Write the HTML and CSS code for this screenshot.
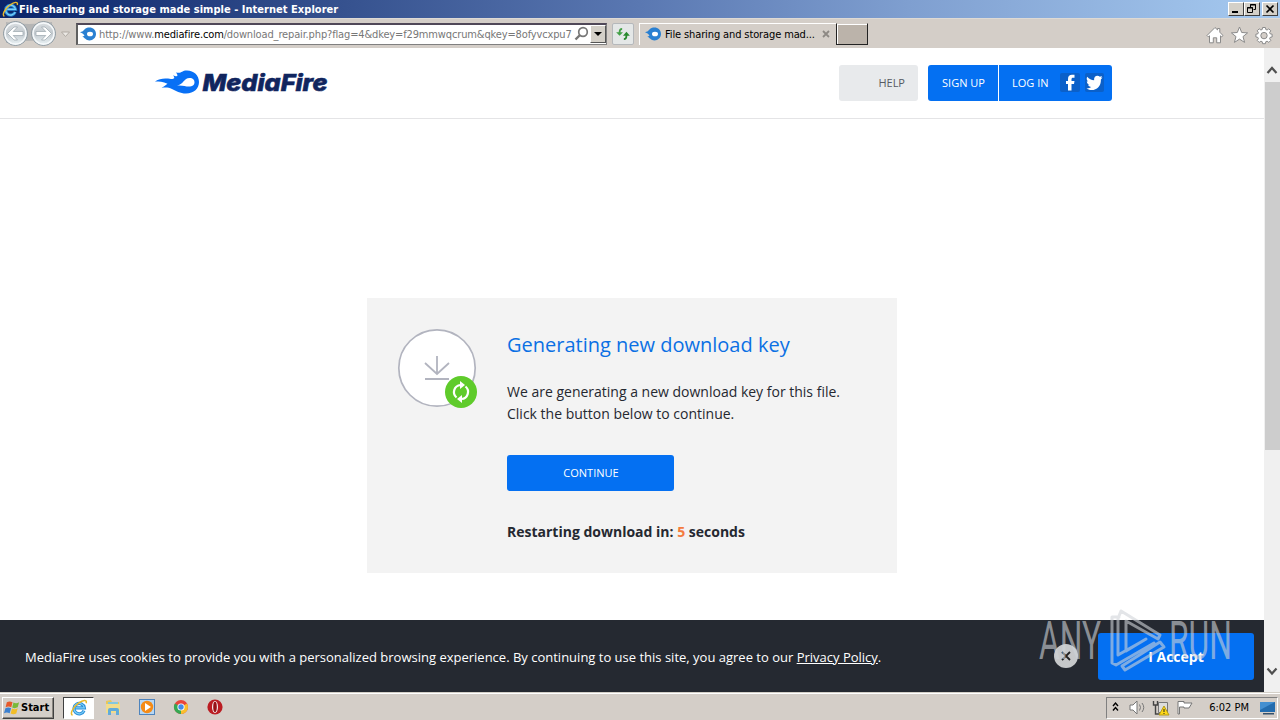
FILE: index.html
```html
<!DOCTYPE html>
<html lang="en">
<head>
<meta charset="utf-8">
<title>File sharing and storage made simple</title>
<link rel="stylesheet" href="styles.css">
</head>
<body>
<svg class="defs" width="0" height="0" aria-hidden="true">
  <defs>
    <symbol id="ie" viewBox="0 0 18 18">
      <path d="M14 11.6A5.2 5.2 0 1 1 14.3 8.8H5.6" fill="none" stroke="#2b8fd9" stroke-width="3.2"/>
      <path d="M14 11.6A5.2 5.2 0 1 1 14.3 8.8H5.6" fill="none" stroke="#7fd0f8" stroke-width="1.2"/>
      <path d="M2.5 16.2C-.5 15 3 8.2 8.5 4.2 13 .9 17.2.2 16.2 4.2" fill="none" stroke="#e9b92c" stroke-width="1.5"/>
    </symbol>
    <symbol id="flame" viewBox="0 0 16 14">
      <path d="M0 5.2C2 4.8 3 4.3 4 3 5.500 1.200 7.500.6 9.500.6 13 .6 16 3.300 16 7s-3 6.400-6.500 6.400C6 13.400 4.500 10.500 2.200 9.200 3.500 9.300 4 9 4.500 8.500 3 6.400 1.500 5.900 0 5.200Z" fill="#2a80d2"/>
      <ellipse cx="10" cy="7" rx="3" ry="2.300" fill="#fff"/>
    </symbol>
  </defs>
</svg>
<div class="window">
  <div class="titlebar">
    <svg class="title-ie" width="17" height="17"><use href="#ie"/></svg>
    <span class="title-text">File sharing and storage made simple - Internet Explorer</span>
    <div class="winbtns">
      <span class="winbtn"><svg width="14" height="12"><path d="M3 9h6" stroke="#000" stroke-width="2"/></svg></span>
      <span class="winbtn"><svg width="14" height="12"><path d="M5.500 4V1.500h5v5H8.500M5 2h6M2.500 4.500h5v5h-5zM2 5h6" fill="none" stroke="#000"/></svg></span>
      <span class="winbtn close"><svg width="14" height="12"><path d="M3.500 2.500l7 7M10.500 2.500l-7 7" stroke="#000" stroke-width="1.700"/></svg></span>
    </div>
  </div>

  <div class="toolbar">
    <svg class="nav" width="76" height="30" viewBox="0 0 76 30">
      <defs><linearGradient id="nv" x1="0" y1="0" x2="0" y2="1"><stop offset="0" stop-color="#dce0e3"/><stop offset=".5" stop-color="#c3cacf"/><stop offset="1" stop-color="#edf5f8"/></linearGradient></defs>
      <path d="M6 3Q29 7 52 3L53 23Q30 20 6 24Z" fill="#b5b5b5"/>
      <circle cx="15.500" cy="14.500" r="12" fill="url(#nv)" stroke="#8b979f"/>
      <circle cx="43.500" cy="14.500" r="12" fill="url(#nv)" stroke="#8b979f"/>
      <circle cx="15.500" cy="14.500" r="10.500" fill="none" stroke="#f5f8fa" stroke-width="1.500"/>
      <circle cx="43.500" cy="14.500" r="10.500" fill="none" stroke="#f5f8fa" stroke-width="1.500"/>
      <path d="M7.500 14.500l6.500-6.500h3.500l-4.300 4.500H23v4H13.200l4.300 4.500H14z" fill="#fff" stroke="#9aa5ac" stroke-width=".7"/>
      <path d="M51.500 14.500L45 8h-3.500l4.300 4.500H36v4h9.800L41.500 21H45z" fill="#fff" stroke="#9aa5ac" stroke-width=".7"/>
      <path d="M61.500 13h8l-4 4.500z" fill="#ece9e5" stroke="#b0aaa3"/>
    </svg>
    <div class="address">
      <svg class="fav" width="16" height="14"><use href="#flame"/></svg>
      <span class="url">http://www.<b>mediafire.com</b>/download_repair.php?flag=4&amp;dkey=f29mmwqcrum&amp;qkey=8ofyvcxpu7</span>
      <svg class="search" width="16" height="16" viewBox="0 0 16 16"><circle cx="9" cy="6" r="4.300" fill="none" stroke="#767676" stroke-width="1.700"/><path d="M6 9l-4.500 4.500" stroke="#767676" stroke-width="2.400"/></svg>
      <span class="drop"><svg width="8" height="4"><path d="M0 0h8L4 4z"/></svg></span>
    </div>
    <span class="refresh"><svg width="14" height="12" viewBox="0 0 16 14"><path d="M7 1Q4 1 4 5v2" fill="none" stroke="#43a047" stroke-width="2"/><path d="M0 5h8L4 9z" fill="#43a047"/><path d="M9 13q3 0 3-4V8" fill="none" stroke="#27892d" stroke-width="2"/><path d="M8 9h8L12 4.500z" fill="#27892d"/></svg></span>
    <div class="tab">
      <svg width="16" height="14"><use href="#flame"/></svg>
      <span class="tab-text">File sharing and storage mad...</span>
      <svg class="tab-x" width="8" height="8"><path d="M1 1l6 6M7 1l-6 6" stroke="#8d8984" stroke-width="1.800"/></svg>
    </div>
    <span class="newtab"></span>
    <svg class="tools" width="68" height="20" viewBox="0 0 68 20" fill="#fff" stroke="#8a8a8a" stroke-width="1">
      <path d="M1 10.500L9 2.500l2.500 2.400V3.500h2.300v3.700L17 10.500l-1.300 1.300-1.200-1v7h-3.800v-5H7.300v5H3.500v-7l-1.200 1z"/>
      <path d="M33.500 2l2.200 5.500 5.900.4-4.600 3.700 1.600 5.800-5.100-3.300-5.100 3.300 1.600-5.800-4.600-3.700 5.900-.4z"/>
      <path fill-rule="evenodd" d="M56.600 2.500h2.800l.4 2 1.300.5 1.700-1.200 2 2-1.200 1.700.5 1.300 2 .4V12l-2 .4-.5 1.300 1.200 1.700-2 2-1.700-1.200-1.300.5-.4 2h-2.800l-.4-2-1.300-.5-1.700 1.200-2-2 1.200-1.700-.5-1.300-2-.4V9.200l2-.4.5-1.300-1.200-1.700 2-2L54.900 5l1.300-.5zM58 7.400a3.200 3.200 0 1 0 0 6.400 3.200 3.200 0 0 0 0-6.400z"/>
    </svg>
  </div>

  <div class="viewport">
    <div class="page">
      <header class="header">
        <svg class="logo" width="176" height="28" viewBox="0 0 176 28">
          <path d="M1 12.500C6 9.500 10 9 17 10 20 10.200 21.500 9 19 6.200 24 8.500 24.500 6.500 22 3.500 28 5 27 1.500 33 1.500 40 1.500 45 6.500 45 13S40 24.500 32 24.500C26 24.500 22 22 18 20 14 18 11 18.500 7.500 18.800 10.500 17.500 11.500 16 13.500 14.800 9 12.500 5 12.500 1 12.500Z" fill="#0870f5"/>
          <path d="M23 16.500C29 16 30 9 35.500 9c3.500 0 5 2 5 4.200 0 3-2.500 4.300-5.500 4.300-4 0-6-1.500-12-1z" fill="#fff"/>
          <text class="wordmark" x="48.500" y="22" textLength="125" lengthAdjust="spacingAndGlyphs">MediaFire</text>
        </svg>
        <div class="actions">
          <span class="btn help">HELP</span>
          <div class="account">
            <span class="btn signup">SIGN UP</span>
            <span class="btn login">LOG IN
              <svg class="social" width="45" height="20" viewBox="0 0 45 20"><rect x="0" y="0" width="20" height="19" rx="2" fill="#0b60c9"/><rect x="25" y="0" width="19" height="19" rx="2" fill="#0b60c9"/><path d="M8 17.500v-6.500H6V8h2V6c0-3 1.700-4.200 4-4.200h2.500v3H13c-1.100 0-1.500.6-1.500 1.700V8h3l-.5 3h-2.500v6.500z" fill="#fff"/><path d="M42.500 4.500l-1.600 1.900c.3 6.500-4 10.600-9.200 10.600-2.300 0-4.100-.6-5.200-1.500 2 .1 3.500-.4 4.700-1.400-1.700-.2-2.600-1-3.100-2.300h1.300c-1.600-.7-2.500-2-2.600-3.600l1.400.4C26.600 7.300 26.300 5.300 27.200 3.800c2 2.200 4.100 3.300 6.900 3.400-.5-4.600 3.800-5.400 5.800-3.400l2.200-.8-1.100 1.700z" fill="#fff"/></svg>
            </span>
          </div>
        </div>
      </header>
      <main class="content">
        <section class="card">
          <svg class="dl" width="82" height="82" viewBox="0 0 82 82">
            <circle cx="40" cy="40" r="38.200" fill="#fff" stroke="#b2b4bf" stroke-width="1.700"/>
            <path d="M40 28v17.500M28 35l12 11 12-11M28 51h24" fill="none" stroke="#b2b4bf" stroke-width="1.800"/>
            <circle cx="64" cy="64" r="16" fill="#5fcb2b"/>
            <path d="M59.500 69.500A7.100 7.100 0 0 1 63.500 57M68.500 58.500A7.100 7.100 0 0 1 64.500 71" fill="none" stroke="#fff" stroke-width="2.200"/>
            <path d="M63 53l5 4-5 4zM65 67l-5 4 5 4z" fill="#fff"/>
          </svg>
          <div class="message">
            <h1 class="heading">Generating new download key</h1>
            <p class="body-text">We are generating a new download key for this file.<br>Click the button below to continue.</p>
            <span class="btn continue">CONTINUE</span>
            <p class="countdown">Restarting download in: <span class="seconds">5</span> seconds</p>
          </div>
        </section>
      </main>
      <div class="cookies">
        <span class="cookie-text">MediaFire uses cookies to provide you with a personalized browsing experience. By continuing to use this site, you agree to our <u>Privacy Policy</u>.</span>
        <svg class="dismiss" width="24" height="24"><circle cx="12" cy="12" r="12" fill="#c6c8ca"/><path d="M8 8l8 8M16 8l-8 8" stroke="#222" stroke-width="1.800"/></svg>
        <span class="accept">I Accept</span>
      </div>
      <svg class="watermark" width="200" height="70" viewBox="0 0 200 70">
        <text x="6" y="53" textLength="62" lengthAdjust="spacingAndGlyphs">ANY</text>
        <text x="136" y="53" textLength="63" lengthAdjust="spacingAndGlyphs">RUN</text>
        <path d="M86 11H79V57L83 59 121 37M85 11V49L108 36M86 10L88 5 127 29 125 33 93 15V45L113 33M89 60l3 4 39-23-4-5z" fill="none" stroke="#d0d4d8" stroke-opacity=".6" stroke-width="3" stroke-linejoin="round" stroke-linecap="round"/>
      </svg>
    </div>
    <div class="scrollbar">
      <svg width="16" height="34"><path d="M3.500 25l4.500-5 4.500 5" fill="none" stroke="#505050" stroke-width="2.200"/></svg>
      <div class="track"><div class="thumb"></div></div>
      <svg width="16" height="34"><path d="M3.500 10.500l4.500 5 4.500-5" fill="none" stroke="#505050" stroke-width="2.200"/></svg>
    </div>
  </div>

  <div class="taskbar">
    <div class="start">
      <svg width="17" height="16" viewBox="0 0 18 16"><path d="M3 2q3-2 6 0L7.700 7.200q-3-1.600-6 0z" fill="#e6592b"/><path d="M10 2.300q3 1.500 6-.3l-1.500 5.300q-3 1.600-5.800.2z" fill="#79b93a"/><path d="M1.500 8.200q3-1.700 6 0L6 13.500q-3-1.600-6 0z" fill="#3c80d0"/><path d="M8.500 8.500q3 1.500 6-.2L13 13.800q-3 1.500-6 0z" fill="#f2bd27"/></svg>
      <span class="start-text">Start</span>
    </div>
    <div class="task active"><svg width="18" height="18"><use href="#ie"/></svg></div>
    <div class="apps">
      <svg width="18" height="18" viewBox="0 0 18 18"><path d="M2 3l5-1 1 2h7v10H2z" fill="#e8c75b"/><path d="M4 4h10v5H4z" fill="#83c8df"/><path d="M2 6h14v9H2z" fill="#f1dc8c"/><path d="M4 17v-5q0-2 2-2h7q2 0 2 2v5h-3v-4H7v4z" fill="#62abd9"/></svg>
      <svg width="18" height="18" viewBox="0 0 18 18"><rect x="1.500" y="1.500" width="15" height="15" fill="#b7d7f4" stroke="#4e84bd"/><circle cx="9" cy="9" r="6.200" fill="#f58b16"/><path d="M7 5l6 4-6 4z" fill="#fff"/></svg>
      <svg width="18" height="18" viewBox="0 0 18 18"><circle cx="9" cy="9" r="7" fill="#e8453c"/><path d="M9 9L2.900 5.500A7 7 0 0 0 9 16z" fill="#35a853"/><path d="M9 9l6-3.500A7 7 0 0 1 9 16z" fill="#f9bf2d"/><circle cx="9" cy="9" r="3.600" fill="#fff"/><circle cx="9" cy="9" r="2.700" fill="#438bea"/></svg>
      <svg width="18" height="18" viewBox="0 0 18 18"><circle cx="9" cy="9" r="7.600" fill="#bb1c22"/><ellipse cx="9" cy="9" rx="3" ry="6" fill="#f6eeee"/><ellipse cx="9" cy="9" rx="1.800" ry="5.200" fill="#981116"/></svg>
    </div>
    <div class="tray">
      <svg class="tray-icons" width="84" height="18" viewBox="0 0 84 18" fill="none" stroke="#777">
        <path d="M2 7l2.500-3L7 7M2 11.500l2.500-3 2.500 3" stroke="#000" stroke-width="1.400"/>
        <path d="M19 6h3l4-4v13l-4-4h-3z" fill="#fff"/><path d="M28.500 5.500q2 3 0 6M31 4q3.500 4.500 0 9" />
        <path d="M47.500 3.500h9v10h-9z" fill="#ddd"/><path d="M42.500 2v4h4V2M44.500 6v9h5" stroke="#444" stroke-width="1.400"/><path d="M53 7l5 9H48z" fill="#ffd817" stroke="#b59b18"/><path d="M53 10v3M53 14v1" stroke="#222"/>
        <path d="M67 2.500h6v1.500h8l-3 5h-5V8h-4.500V15H67z" fill="#fff"/>
      </svg>
      <span class="clock">6:02 PM</span>
      <svg width="16" height="16" viewBox="0 0 16 16"><path d="M0 2h15v10H0z" fill="#236cae"/><path d="M0 2h15L0 10z" fill="#438fd0"/><path d="M3 13h11v1.500H3z" fill="#34506a"/></svg>
    </div>
  </div>
</div>
</body>
</html>
```
FILE: styles.css
```css
* { box-sizing: border-box; }
body { margin: 0; overflow: hidden; background: #fff; font-family: "Open Sans", sans-serif; }
p, h1 { margin: 0; }
svg { display: block; flex: none; }
.defs { position: absolute; }
.window { display: flex; flex-direction: column; width: 1280px; height: 720px; white-space: nowrap; }

.titlebar, .toolbar, .taskbar { display: flex; align-items: center; flex: none; font-family: "DejaVu Sans Condensed", "DejaVu Sans", sans-serif; font-size: 11px; color: #000; }
.titlebar { height: 18px; padding-left: 2px; background: linear-gradient(90deg, #0a246a 0, #36528f 27%, #5a78b2 50%, #7f9fd0 71%, #a6caf0 100%); }
.title-text { color: #fff; font-weight: bold; letter-spacing: .03px; }
.winbtns { display: flex; margin-left: auto; padding-right: 2px; }
.winbtn { width: 16px; height: 14px; background: #d4d0c8; border: 1px solid; border-color: #fff #404040 #404040 #fff; overflow: hidden; }
.winbtn.close { margin-left: 2px; }

.toolbar { height: 30px; background: #d4cec8; border-top: 1px solid #dedad5; }
.address { display: flex; align-items: center; width: 531px; height: 22px; padding-left: 2px; background: #fff; border: 1px solid #808080; border-top: 2px solid #504858; border-left: 2px solid #606060; }
.url { width: 474px; margin-left: 3px; color: #777; letter-spacing: -.14px; }
.url b { color: #000; font-weight: normal; }
.search { margin-left: 2px; }
.drop { display: flex; align-items: center; justify-content: center; width: 16px; height: 18px; margin-left: auto; background: #d4d0c8; border: 1px solid; border-color: #fff #555 #555 #fff; }
.refresh { display: flex; align-items: center; justify-content: center; width: 22px; height: 22px; margin-left: 5px; background: #e4e7e7; border: 1px solid #b5b8bb; border-radius: 2px; }
.tab { display: flex; align-items: center; width: 197px; height: 22px; margin-left: 5px; padding-left: 5px; border: 1px solid #fff; border-bottom: 0; border-right: 0; }
.tab-text { width: 153px; margin-left: 4px; letter-spacing: -.12px; }
.tab-x { margin-left: 4px; }
.newtab { width: 32px; height: 22px; background: #bbb3aa; border: 1px solid #222; border-top-color: #d4cec8; box-shadow: inset 1px 1px #fff; }
.tools { margin: 2px 6px 0 auto; }

.viewport { display: flex; height: 644px; flex: none; }
.page { position: relative; display: flex; flex-direction: column; width: 1264px; background: #fff; }
.header { display: flex; justify-content: space-between; height: 71px; padding: 17px 152px 0 154px; border-bottom: 1px solid #e4e4e6; flex: none; }
.logo { margin-top: 4px; }
.wordmark { font: italic 800 23px Inter, "Liberation Sans", sans-serif; fill: #10255e; stroke: #10255e; stroke-width: .6px; }
.actions { display: flex; gap: 10px; }
.btn { display: flex; align-items: center; height: 36px; padding-bottom: 1px; font-size: 11px; border-radius: 3px; color: #fff; background: #0470f2; }
.help { width: 79px; padding-right: 13px; justify-content: flex-end; background: #e8eaec; color: #575b63; }
.account { display: flex; gap: 1px; }
.signup { width: 70px; padding-left: 1px; justify-content: center; border-radius: 3px 0 0 3px; }
.login { width: 113px; padding-left: 13px; border-radius: 0 3px 3px 0; }
.social { margin: 1px 0 0 11px; }
.content { display: flex; flex: 1; justify-content: center; padding-top: 179px; }
.card { display: flex; width: 530px; height: 275px; padding: 30px; background: #f3f3f3; }
.message { margin-left: 28px; color: #252830; }
.heading { padding-top: 1px; font-size: 20px; line-height: 32px; font-weight: 400; color: #0b70e4; }
.body-text { margin-top: 20px; font-size: 14px; line-height: 22px; }
.continue { justify-content: center; width: 167px; padding-left: 1px; margin-top: 30px; }
.countdown { margin-top: 30px; font-size: 14px; line-height: 22px; font-weight: 700; }
.seconds { color: #f47b3e; }
.cookies { display: flex; align-items: center; height: 72px; padding: 0 10px 0 25px; background: #252931; color: #fff; flex: none; }
.cookie-text { padding-top: 2px; font-size: 13px; }
.dismiss { margin-left: auto; }
.accept { display: flex; align-items: center; justify-content: center; width: 156px; height: 47px; margin-left: 20px; background: #0470f2; border-radius: 3px; font-size: 14px; font-weight: 700; }
.watermark { position: absolute; right: 31px; bottom: 16px; }
.watermark text { font: 400 53px Roboto, "Open Sans", sans-serif; fill: #d0d4d8; fill-opacity: .6; }
.scrollbar { display: flex; flex-direction: column; width: 16px; background: #f0f0f0; }
.track { flex: 1; }
.thumb { height: 368px; margin-left: 1px; background: #cdcdcd; }

.taskbar { height: 28px; padding: 2px 2px 0; background: #d4cec8; border-top: 1px solid #d4d0c8; box-shadow: inset 0 1px #fff; }
.start { display: flex; align-items: center; width: 52px; height: 22px; padding-left: 1px; border: 1px solid; border-color: #fff #404040 #404040 #fff; box-shadow: inset -1px -1px #8a8680; }
.start-text { font-weight: bold; font-size: 11px; letter-spacing: 0; }
.task { display: flex; align-items: center; justify-content: center; width: 31px; height: 22px; margin-left: 9px; background: #fff; border: 1px solid; border-color: #404040 #fff #fff #404040; }
.apps { display: flex; gap: 16px; margin-left: 10px; padding-bottom: 1px; }
.tray { display: flex; align-items: center; width: 172px; height: 22px; margin-left: auto; padding: 0 1px 0 4px; border: 1px solid; border-color: #808080 #fff #fff #808080; }
.clock { margin-left: auto; margin-right: 11px; }
```
